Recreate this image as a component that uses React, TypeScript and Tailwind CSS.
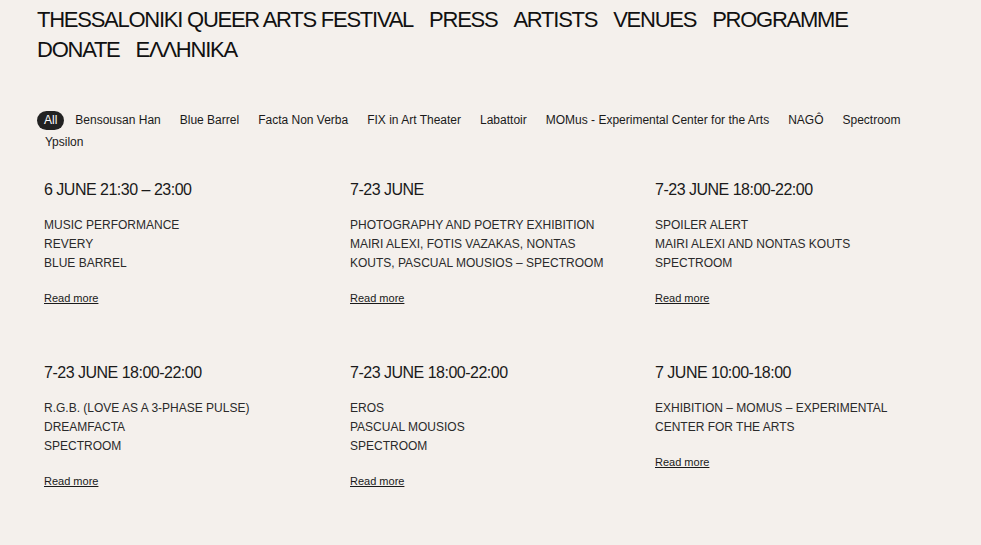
import type { FC } from 'react';

const navItems = ['THESSALONIKI QUEER ARTS FESTIVAL', 'PRESS', 'ARTISTS', 'VENUES', 'PROGRAMME', 'DONATE', 'ΕΛΛΗΝΙΚΑ'];

const venues = [
  'All',
  'Bensousan Han',
  'Blue Barrel',
  'Facta Non Verba',
  'FIX in Art Theater',
  'Labattoir',
  'MOMus - Experimental Center for the Arts',
  'NAGÔ',
  'Spectroom',
  'Ypsilon',
];

const events = [
  { date: '6 JUNE 21:30 – 23:00', lines: ['MUSIC PERFORMANCE', 'REVERY', 'BLUE BARREL'] },
  {
    date: '7-23 JUNE',
    lines: ['PHOTOGRAPHY AND POETRY EXHIBITION', 'MAIRI ALEXI, FOTIS VAZAKAS, NONTAS', 'KOUTS, PASCUAL MOUSIOS – SPECTROOM'],
  },
  { date: '7-23 JUNE 18:00-22:00', lines: ['SPOILER ALERT', 'MAIRI ALEXI AND NONTAS KOUTS', 'SPECTROOM'] },
  { date: '7-23 JUNE 18:00-22:00', lines: ['R.G.B. (LOVE AS A 3-PHASE PULSE)', 'DREAMFACTA', 'SPECTROOM'] },
  { date: '7-23 JUNE 18:00-22:00', lines: ['EROS', 'PASCUAL MOUSIOS', 'SPECTROOM'] },
  { date: '7 JUNE 10:00-18:00', lines: ['EXHIBITION – MOMUS – EXPERIMENTAL', 'CENTER FOR THE ARTS'] },
];

const App: FC = () => {
  return (
    <div className="min-h-[545px] bg-[#f4f0ec] pl-[37px] pt-[5px] pb-10 font-['Liberation_Sans',Arial,sans-serif] text-[#1a1a1a]">
      {/* Header nav */}
      <nav className="flex flex-wrap gap-x-[16px] text-[22px] leading-[30px] tracking-[-1.25px] text-[#111] w-[880px]">
        {navItems.map((item) => (
          <a key={item} href="#" className="whitespace-nowrap">
            {item}
          </a>
        ))}
      </nav>

      {/* Venue filters */}
      <div className="mt-[46px] flex flex-wrap gap-x-[3px] gap-y-[3px] w-[900px] text-[12px] leading-[19px]">
        {venues.map((v, i) => (
          <button
            key={v}
            className={
              i === 0
                ? 'h-[19px] rounded-full bg-[#222] px-[7px] text-white'
                : 'h-[19px] px-[8px] text-[#1a1a1a]'
            }
          >
            {v}
          </button>
        ))}
      </div>

      {/* Events grid */}
      <div className="mt-[28px] pl-[7px] grid grid-cols-[306px_305px_306px] gap-y-[57px] items-start">
        {events.map((e, i) => (
          <div key={i} className="flex flex-col">
            <h3 className="text-[16px] leading-[20px] tracking-[-0.5px] text-[#1a1a1a]">{e.date}</h3>
            <div className="mt-[16px] text-[12px] leading-[19px] text-[#2a2a2a]">
              {e.lines.map((l, j) => (
                <p key={j}>{l}</p>
              ))}
            </div>
            <a href="#" className="mt-[17px] text-[11px] leading-[16px] underline text-[#1a1a1a] self-start">
              Read more
            </a>
          </div>
        ))}
      </div>
    </div>
  );
};

export default App;
